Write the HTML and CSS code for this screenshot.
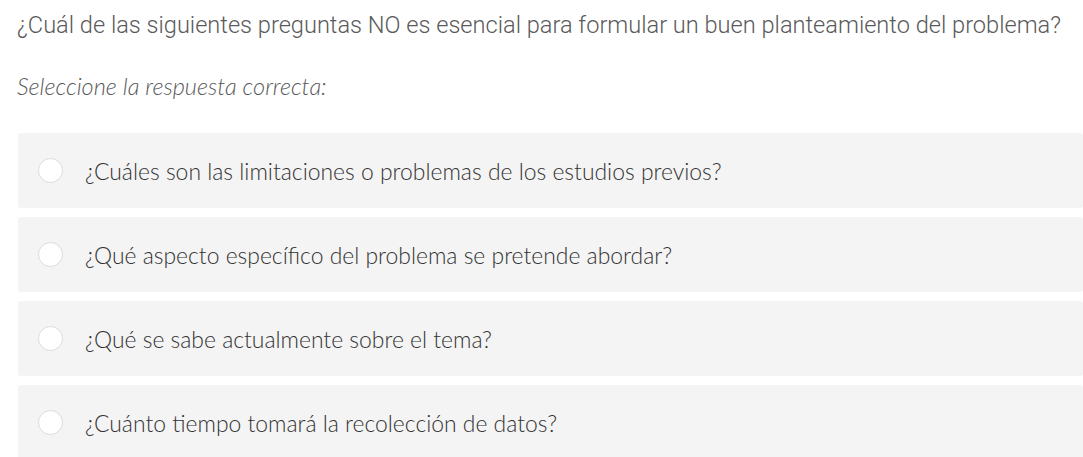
FILE: index.html
```html
<html>
	<head>
		<meta name="viewport" content="width=device-width, initial-scale=1">
		<title>Pregunta</title>
		<link rel="stylesheet" href="styles.css">
	</head>
	<body>
		<div class="question">¿Cuál de las siguientes preguntas NO es esencial para formular un buen planteamiento del problema?</div>
		<div class="hint">Seleccione la respuesta correcta:</div>
		<div class="options">
			<label class="option"><span class="radio"></span>¿Cuáles son las limitaciones o problemas de los estudios previos?</label>
			<label class="option"><span class="radio"></span>¿Qué aspecto específico del problema se pretende abordar?</label>
			<label class="option"><span class="radio"></span>¿Qué se sabe actualmente sobre el tema?</label>
			<label class="option"><span class="radio"></span>¿Cuánto tiempo tomará la recolección de datos?</label>
		</div>
	</body>
</html>
```

FILE: styles.css
```css
body {
	margin: 0;
	padding: 9px 0 0 17px;
	background: #fff;
	color: #5a5a5a;
	overflow: hidden;
}

.question {
	font-family: Roboto, sans-serif;
	font-weight: 300;
	font-size: 23.6px;
	line-height: 32px;
	white-space: nowrap;
}

.hint {
	font-family: Lato, sans-serif;
	font-style: italic;
	font-weight: 300;
	font-size: 23.5px;
	line-height: 28px;
	margin-top: 31px;
}

.options {
	margin-top: 33px;
	margin-left: 1px;
	display: flex;
	flex-direction: column;
	gap: 9px;
}

.option {
	display: flex;
	align-items: center;
	height: 75px;
	background: #f4f4f4;
	border-radius: 3px;
	padding-left: 20px;
	font-family: Lato, sans-serif;
	font-weight: 300;
	font-size: 22.9px;
	color: #333;
}

.radio {
	width: 25px;
	height: 25px;
	border: 1px solid #dcdcdc;
	border-radius: 50%;
	background: #fff;
	box-sizing: border-box;
	margin-right: 22px;
	flex-shrink: 0;
}
```
